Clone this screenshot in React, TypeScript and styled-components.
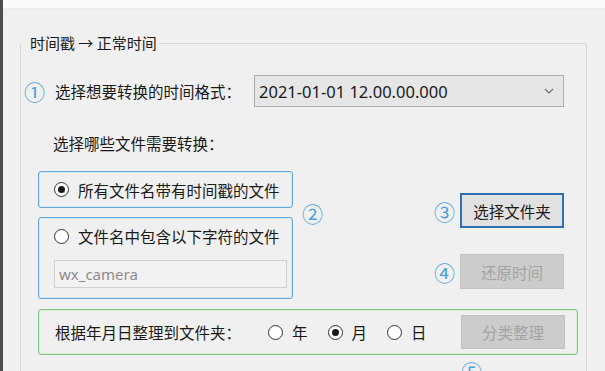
import React from 'react';
import styled, { createGlobalStyle } from 'styled-components';

const Global = createGlobalStyle`
  html, body { margin: 0; padding: 0; background: #f0f0f0; overflow: hidden; }
  body { font-family: "Noto Sans CJK SC", "Noto Sans", sans-serif; color: #1a1a1a; }
  * { box-sizing: border-box; }
`;

const Window = styled.div`
  width: 605px;
  height: 371px;
  display: flex;
  flex-direction: column;
  border-left: 3px solid #4d4d4d;
  background: #f0f0f0;
  overflow: hidden;
`;

const TopStrip = styled.div`
  flex: none;
  height: 9px;
  background: #fafafa;
  border-bottom: 1px solid #ebebeb;
`;

const Body = styled.div`
  flex: 1;
  padding-left: 17px;
`;

const Group = styled.fieldset`
  margin: 23px 0 0 0;
  padding: 0;
  min-width: 0;
  width: 567px;
  border: 1px solid #d6d6d6;
  border-radius: 3px;
`;

const Legend = styled.legend`
  padding: 0;
  font-size: 15px;
  line-height: 22px;
  color: #1a1a1a;
`;

const LegendText = styled.span`
  display: inline-block;
  margin-left: 6px;
  padding: 0 3px;
  background: #f0f0f0;
`;

const Circled = styled.span`
  font-family: "Noto Sans CJK SC", sans-serif;
  font-size: 21px;
  line-height: 18px;
  color: #4a9fd9;
`;

const FormatRow = styled.div`
  margin-top: 21px;
  padding-left: 3px;
  display: grid;
  grid-template-columns: 31px 199px 310px;
  align-items: center;
  height: 32px;
`;

const Label = styled.span`
  font-size: 15.5px;
  line-height: 22px;
  white-space: nowrap;
`;

const Select = styled.div`
  height: 32px;
  display: flex;
  align-items: center;
  justify-content: space-between;
  padding: 0 9px 0 4px;
  background: #e6e6e6;
  border: 1px solid #adadad;
  font-family: "Noto Sans", sans-serif;
  font-size: 16.5px;
  color: #1a1a1a;
`;

const SubLabel = styled(Label)`
  display: block;
  margin-top: 25px;
  padding-left: 32px;
`;

const Main = styled.div`
  margin-top: 17px;
  padding-left: 17px;
  display: flex;
  align-items: flex-start;
`;

const LeftCol = styled.div`
  width: 255px;
  display: flex;
  flex-direction: column;
  gap: 9px;
`;

const BlueBox = styled.div<{ $tall?: boolean }>`
  height: ${(p) => (p.$tall ? 82 : 37)}px;
  border: 1px solid #64a8d8;
  box-shadow: inset 0 0 0 1px #d4e7f5;
  border-radius: 3px;
  padding: 0 5px 0 15px;
  display: flex;
  flex-direction: column;
  justify-content: ${(p) => (p.$tall ? 'flex-start' : 'center')};
`;

const RadioRow = styled.label<{ $h?: number }>`
  display: flex;
  align-items: center;
  gap: 9px;
  height: ${(p) => p.$h ?? 22}px;
  font-size: 15.5px;
  white-space: nowrap;
`;

const Radio = styled.span<{ $checked?: boolean }>`
  flex: none;
  width: 15px;
  height: 15px;
  border-radius: 50%;
  border: 1px solid #333;
  background: #fff;
  display: flex;
  align-items: center;
  justify-content: center;
  &::after {
    content: '';
    display: ${(p) => (p.$checked ? 'block' : 'none')};
    width: 7px;
    height: 7px;
    border-radius: 50%;
    background: #1a1a1a;
  }
`;

const TextInput = styled.div`
  margin-top: 6px;
  height: 28px;
  width: 233px;
  border: 1px solid #cfcfcf;
  background: #f2f2f2;
  display: flex;
  align-items: center;
  padding-left: 4px;
  font-family: "Noto Sans", sans-serif;
  font-size: 15px;
  color: #8c8c8c;
`;

const Marker2 = styled(Circled)`
  margin: 33px 0 0 9px;
`;

const RightCol = styled.div`
  margin: 22px 22px 0 auto;
  display: flex;
  flex-direction: column;
  gap: 26px;
`;

const ActionRow = styled.div`
  display: flex;
  align-items: center;
  gap: 5px;
`;

const Button = styled.div<{ $focused?: boolean; $disabled?: boolean; $h?: number }>`
  width: 104px;
  height: ${(p) => p.$h ?? 35}px;
  display: flex;
  align-items: center;
  justify-content: center;
  font-size: 15.5px;
  background: ${(p) => (p.$disabled ? '#cccccc' : '#e1e1e1')};
  color: ${(p) => (p.$disabled ? '#a3a3a3' : '#1a1a1a')};
  border: ${(p) => (p.$focused ? '2px solid #2a72b5' : p.$disabled ? '1px solid #c2c2c2' : '1px solid #adadad')};
`;

const GreenBox = styled.div`
  margin: 10px 8px 0 17px;
  height: 46px;
  border: 1px solid #7cc47c;
  box-shadow: inset 0 0 0 1px #d6efd6;
  border-radius: 3px;
  display: flex;
  align-items: center;
  padding: 0 12px 0 16px;
`;

const RadioGroup = styled.div`
  margin-left: 27px;
  display: flex;
  gap: 20px;
`;

const PushRight = styled.div`
  margin-left: auto;
`;

const Footer = styled.div`
  margin-top: 6px;
  padding-left: 440px;
`;

const Chevron = () => (
  <svg width="10" height="6" viewBox="0 0 10 6">
    <path d="M1 1 L5 5 L9 1" fill="none" stroke="#6b6b6b" strokeWidth="1.1" />
  </svg>
);

export default function App() {
  return (
    <>
      <Global />
      <Window>
        <TopStrip />
        <Body>
          <Group>
            <Legend>
              <LegendText>时间戳 → 正常时间</LegendText>
            </Legend>
            <FormatRow>
              <Circled>①</Circled>
              <Label>选择想要转换的时间格式：</Label>
              <Select>
                <span>2021-01-01 12.00.00.000</span>
                <Chevron />
              </Select>
            </FormatRow>
            <SubLabel>选择哪些文件需要转换：</SubLabel>
            <Main>
              <LeftCol>
                <BlueBox>
                  <RadioRow>
                    <Radio $checked />
                    所有文件名带有时间戳的文件
                  </RadioRow>
                </BlueBox>
                <BlueBox $tall>
                  <RadioRow $h={36}>
                    <Radio />
                    文件名中包含以下字符的文件
                  </RadioRow>
                  <TextInput>wx_camera</TextInput>
                </BlueBox>
              </LeftCol>
              <Marker2>②</Marker2>
              <RightCol>
                <ActionRow>
                  <Circled>③</Circled>
                  <Button $focused>选择文件夹</Button>
                </ActionRow>
                <ActionRow>
                  <Circled>④</Circled>
                  <Button $disabled>还原时间</Button>
                </ActionRow>
              </RightCol>
            </Main>
            <GreenBox>
              <Label>根据年月日整理到文件夹：</Label>
              <RadioGroup>
                <RadioRow><Radio />年</RadioRow>
                <RadioRow><Radio $checked />月</RadioRow>
                <RadioRow><Radio />日</RadioRow>
              </RadioGroup>
              <PushRight>
                <Button $disabled $h={34}>分类整理</Button>
              </PushRight>
            </GreenBox>
            <Footer>
              <Circled>⑤</Circled>
            </Footer>
          </Group>
        </Body>
      </Window>
    </>
  );
}
